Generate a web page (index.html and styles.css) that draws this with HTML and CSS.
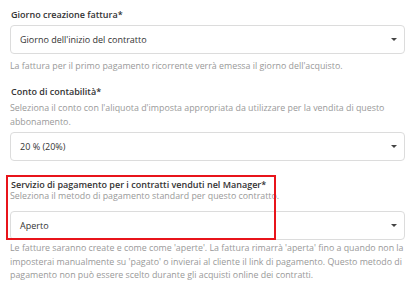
FILE: index.html
```html
<!DOCTYPE html>
<html lang="it">

<head>
  <meta charset="UTF-8">
  <meta name="viewport" content="width=device-width, initial-scale=1.0">
  <title>Impostazioni contratto</title>
  <link rel="stylesheet" href="styles.css">
</head>

<body>
  <div class="form">
    <div class="field">
      <label class="field-label">Giorno creazione fattura*</label>
      <div class="select">
        <span>Giorno dell'inizio del contratto</span>
        <span class="caret"></span>
      </div>
      <p class="help help-after">La fattura per il primo pagamento ricorrente verrà emessa il giorno dell'acquisto.</p>
    </div>

    <div class="field field-2">
      <label class="field-label">Conto di contabilità*</label>
      <p class="help">Seleziona il conto con l'aliquota d'imposta appropriata da utilizzare per la vendita di questo abbonamento.</p>
      <div class="select">
        <span>20 % (20%)</span>
        <span class="caret"></span>
      </div>
    </div>

    <div class="field field-3">
      <div class="highlight"></div>
      <label class="field-label">Servizio di pagamento per i contratti venduti nel Manager*</label>
      <p class="help help-tight">Seleziona il metodo di pagamento standard per questo contratto.</p>
      <div class="select select-spaced">
        <span>Aperto</span>
        <span class="caret"></span>
      </div>
      <p class="help help-last">Le fatture saranno create e come come 'aperte'. La fattura rimarrà 'aperta' fino a quando non la imposterai manualmente su 'pagato' o invierai al cliente il link di pagamento. Questo metodo di pagamento non può essere scelto durante gli acquisti online dei contratti.</p>
    </div>
  </div>
</body>

</html>
```

FILE: styles.css
```css
body {
  margin: 0;
  font-family: 'Open Sans', 'Noto Sans', sans-serif;
  background: #fff;
  color: #333;
}

.form {
  padding: 9px 11px 0 10px;
}

.field {
  position: relative;
}

.field-2 {
  margin-top: 13px;
}

.field-3 {
  margin-top: 18px;
}

.field-label {
  display: block;
  font-size: 9px;
  line-height: 12px;
  font-weight: 600;
  color: #333;
  padding-left: 1px;
}

.help {
  margin: 3px 0 0;
  font-size: 8.85px;
  line-height: 14px;
  color: #999;
}

.help-after {
  margin-top: 5px;
}

.help-tight {
  margin-top: 0;
  line-height: 11px;
}

.help-last {
  margin-top: 2px;
  line-height: 13.5px;
}

.select {
  display: flex;
  align-items: center;
  justify-content: space-between;
  height: 27px;
  margin-top: 4px;
  padding: 0 9px;
  border: 1px solid #dcdcdc;
  border-radius: 4px;
  font-size: 9px;
  color: #333;
}

.field-2 .select {
  margin-top: 3px;
}

.select-spaced {
  margin-top: 9px;
}

.caret {
  width: 0;
  height: 0;
  border-left: 3px solid transparent;
  border-right: 3px solid transparent;
  border-top: 3px solid #444;
  margin-right: -2px;
}

.highlight {
  position: absolute;
  left: -4px;
  top: -4px;
  width: 266px;
  height: 61px;
  border: 2px solid #e8141b;
  pointer-events: none;
}
```
